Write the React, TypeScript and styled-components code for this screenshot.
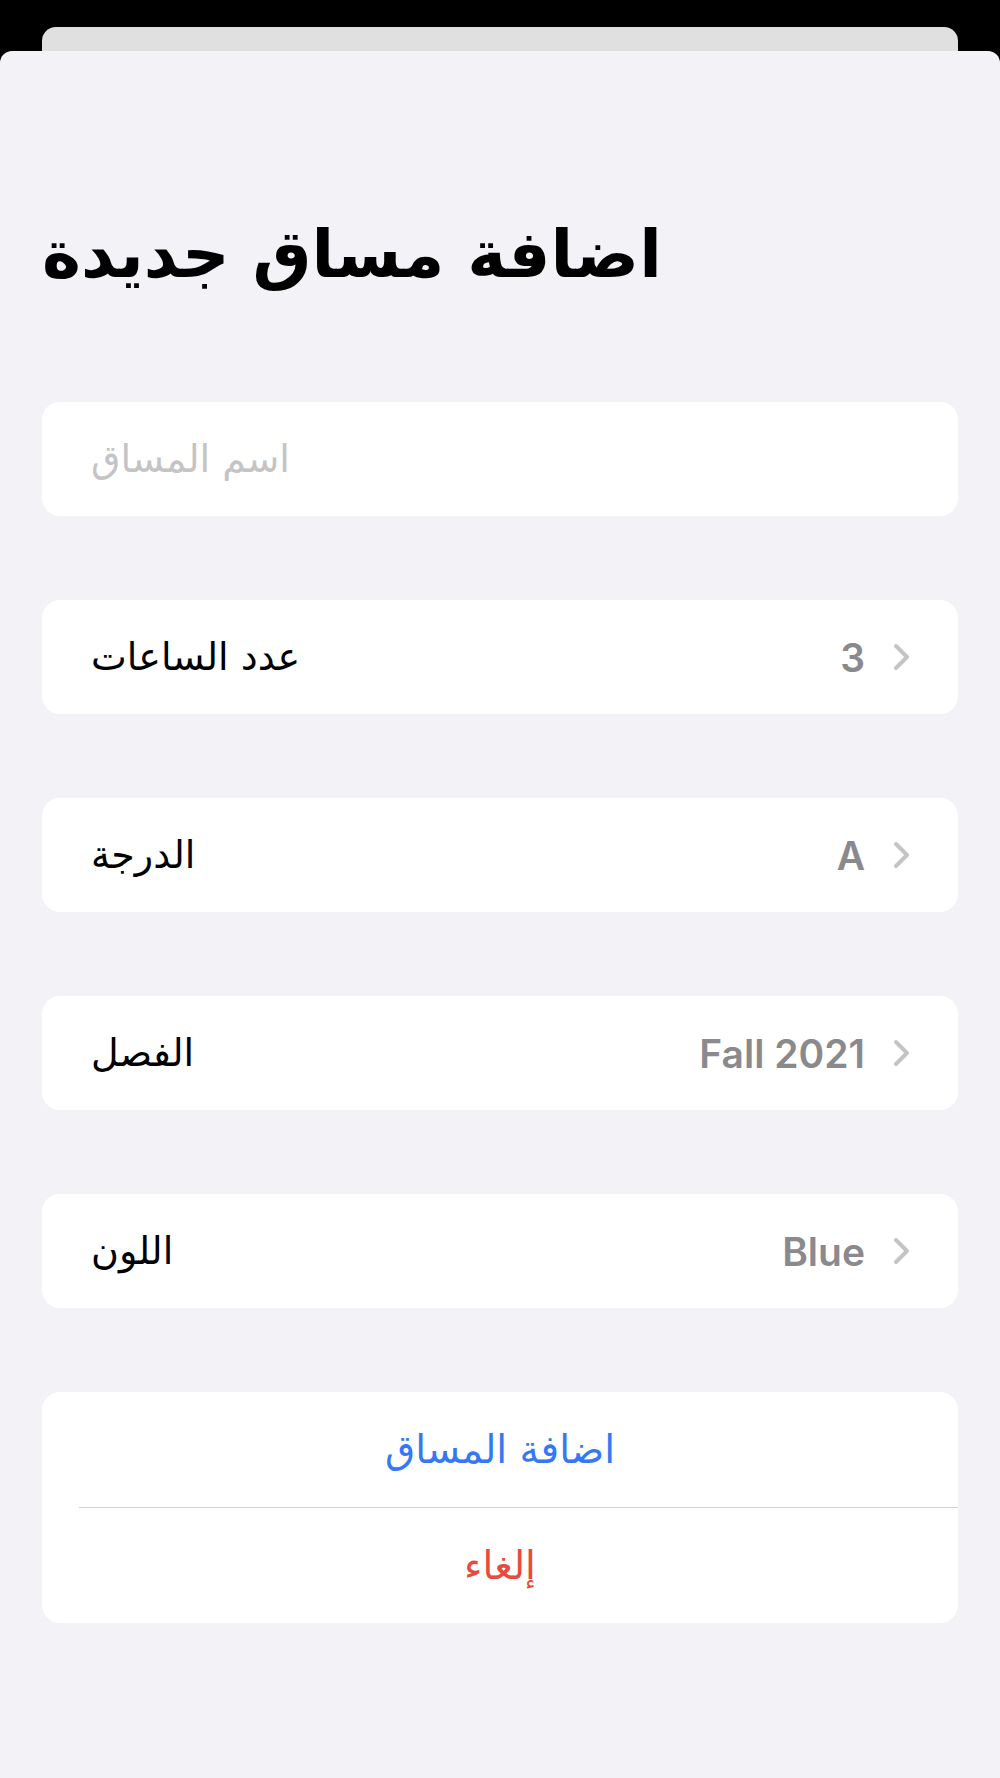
import React from 'react';
import styled, { createGlobalStyle } from 'styled-components';

const GlobalStyle = createGlobalStyle`
  html, body {
    margin: 0;
    padding: 0;
    background: #000;
  }
  * {
    box-sizing: border-box;
  }
`;

const Screen = styled.div`
  width: 1000px;
  min-height: 1778px;
  background: #000;
  padding-top: 27px;
  font-family: 'DejaVu Sans', 'Noto Sans', sans-serif;
`;

const BackCard = styled.div`
  height: 24px;
  margin: 0 42px;
  background: #e0e0e0;
  border-radius: 14px 14px 0 0;
`;

const Sheet = styled.div`
  min-height: 1727px;
  background: #f2f2f7;
  border-radius: 12px 12px 0 0;
  padding: 0 42px;
  display: flex;
  flex-direction: column;
`;

const Title = styled.h1`
  margin: 159px 0 0;
  height: 90px;
  font-family: 'DejaVu Sans', sans-serif;
  font-weight: 700;
  font-size: 66px;
  line-height: 90px;
  color: #000;
`;

const Form = styled.div`
  margin-top: 102px;
  display: flex;
  flex-direction: column;
  gap: 84px;
`;

const Card = styled.div`
  background: #fff;
  border-radius: 18px;
  overflow: hidden;
`;

const Row = styled.div`
  height: 114px;
  display: flex;
  align-items: center;
  padding: 0 48px 0 49px;
`;

const Label = styled.span<{ $muted?: boolean }>`
  font-size: 38px;
  color: ${(p) => (p.$muted ? '#c4c4c6' : '#000')};
  flex: 1;
`;

const Value = styled.span`
  font-family: Inter, 'Liberation Sans', sans-serif;
  font-weight: 600;
  font-size: 39px;
  color: #8a8a8e;
  margin-right: 28px;
`;

const Chevron = () => (
  <svg width="17" height="28" viewBox="0 0 17 28" fill="none">
    <path
      d="M3 3 L14 14 L3 25"
      stroke="#c4c4c7"
      strokeWidth="4"
      strokeLinecap="round"
      strokeLinejoin="round"
    />
  </svg>
);

const ActionButton = styled.div<{ $tone: 'blue' | 'red' }>`
  height: 115px;
  display: flex;
  align-items: center;
  justify-content: center;
  font-size: 39px;
  color: ${(p) => (p.$tone === 'blue' ? '#3478f6' : '#e94a3b')};
`;

const Divider = styled.div`
  height: 1px;
  margin-left: 37px;
  background: #d1d1d6;
`;

type Field = { label: string; value: string };

const fields: Field[] = [
  { label: 'عدد الساعات', value: '3' },
  { label: 'الدرجة', value: 'A' },
  { label: 'الفصل', value: 'Fall 2021' },
  { label: 'اللون', value: 'Blue' },
];

export default function App() {
  return (
    <>
      <GlobalStyle />
      <Screen>
        <BackCard />
        <Sheet>
          <Title>اضافة مساق جديدة</Title>
          <Form>
            <Card>
              <Row>
                <Label $muted>اسم المساق</Label>
              </Row>
            </Card>
            {fields.map((f) => (
              <Card key={f.label}>
                <Row>
                  <Label>{f.label}</Label>
                  <Value>{f.value}</Value>
                  <Chevron />
                </Row>
              </Card>
            ))}
            <Card>
              <ActionButton $tone="blue">اضافة المساق</ActionButton>
              <Divider />
              <ActionButton $tone="red">إلغاء</ActionButton>
            </Card>
          </Form>
        </Sheet>
      </Screen>
    </>
  );
}
